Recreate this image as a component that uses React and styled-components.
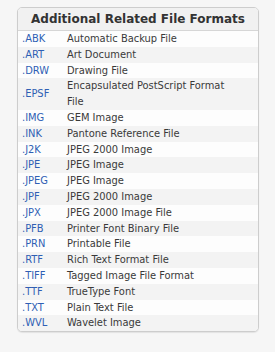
import React from 'react';
import styled, { createGlobalStyle } from 'styled-components';

const Global = createGlobalStyle`
  html, body {
    margin: 0;
    padding: 0;
    background: #f6f6f6;
  }
  body {
    font-family: 'DejaVu Sans', Verdana, sans-serif;
  }
`;

const Page = styled.div`
  width: 275px;
  height: 352px;
  padding: 7px 17px 0 17px;
  box-sizing: border-box;
`;

const Box = styled.div`
  width: 242px;
  box-sizing: border-box;
  border: 1px solid #cdcdcd;
  border-radius: 5px;
  background: #fdfdfd;
  overflow: hidden;
  box-shadow: 0 1px 1px rgba(0, 0, 0, 0.08);
`;

const Header = styled.div`
  height: 22px;
  line-height: 22px;
  text-align: center;
  font-weight: bold;
  font-size: 12px;
  color: #333;
  background: #f1f1f1;
  border-bottom: 1px solid #d6d6d6;
`;

const Row = styled.div`
  display: grid;
  grid-template-columns: 45px 1fr;
  align-items: center;
  padding: 0 16px 0 4px;
  line-height: 15.8px;
  font-family: 'DejaVu Sans Condensed', 'DejaVu Sans', sans-serif;
  font-size: 11px;
  background: ${p => (p.$odd ? '#f3f3f3' : '#fdfdfd')};
`;

const Ext = styled.span`
  color: #2f5fb4;
`;

const Desc = styled.span`
  color: #3a3a3a;
`;

const formats = [
  ['.ABK', 'Automatic Backup File'],
  ['.ART', 'Art Document'],
  ['.DRW', 'Drawing File'],
  ['.EPSF', 'Encapsulated PostScript Format File'],
  ['.IMG', 'GEM Image'],
  ['.INK', 'Pantone Reference File'],
  ['.J2K', 'JPEG 2000 Image'],
  ['.JPE', 'JPEG Image'],
  ['.JPEG', 'JPEG Image'],
  ['.JPF', 'JPEG 2000 Image'],
  ['.JPX', 'JPEG 2000 Image File'],
  ['.PFB', 'Printer Font Binary File'],
  ['.PRN', 'Printable File'],
  ['.RTF', 'Rich Text Format File'],
  ['.TIFF', 'Tagged Image File Format'],
  ['.TTF', 'TrueType Font'],
  ['.TXT', 'Plain Text File'],
  ['.WVL', 'Wavelet Image'],
];

const App = () => (
  <Page>
    <Global />
    <Box>
      <Header>Additional Related File Formats</Header>
      {formats.map(([ext, desc], i) => (
        <Row key={ext} $odd={i % 2 === 1}>
          <Ext>{ext}</Ext>
          <Desc>{desc}</Desc>
        </Row>
      ))}
    </Box>
  </Page>
);

export default App;
